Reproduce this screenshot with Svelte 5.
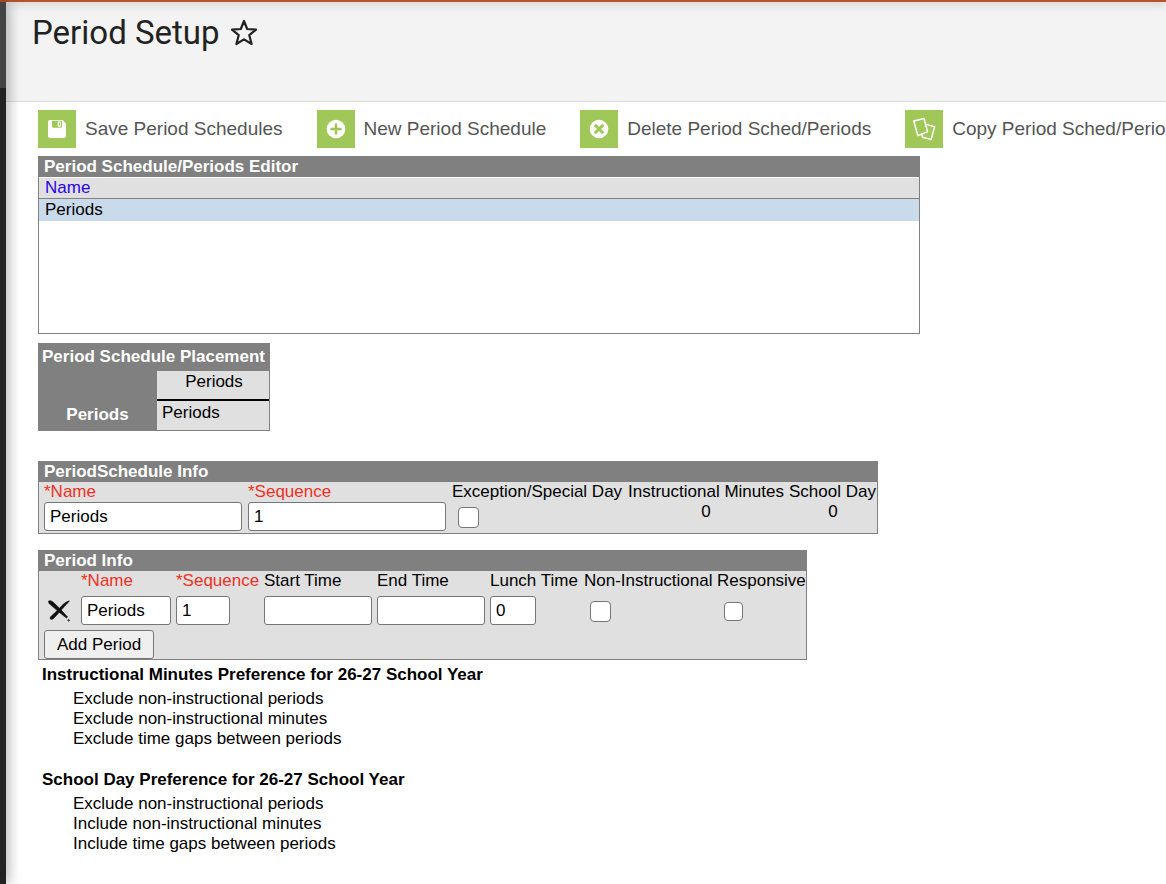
<script>
  const actions = [
    { label: 'Save Period Schedules', icon: 'save' },
    { label: 'New Period Schedule', icon: 'add' },
    { label: 'Delete Period Sched/Periods', icon: 'remove' },
    { label: 'Copy Period Sched/Periods', icon: 'copy' }
  ];

  const preferences = [
    {
      title: 'Instructional Minutes Preference for 26-27 School Year',
      rules: [
        'Exclude non-instructional periods',
        'Exclude non-instructional minutes',
        'Exclude time gaps between periods'
      ]
    },
    {
      title: 'School Day Preference for 26-27 School Year',
      rules: [
        'Exclude non-instructional periods',
        'Include non-instructional minutes',
        'Include time gaps between periods'
      ]
    }
  ];

  let scheduleName = $state('Periods');
  let scheduleSequence = $state('1');
  let exceptionDay = $state(false);
  let periods = $state([
    { name: 'Periods', sequence: '1', start: '', end: '', lunch: '0', nonInstructional: false, responsive: false }
  ]);

  function addPeriod() {
    periods.push({ name: '', sequence: String(periods.length + 1), start: '', end: '', lunch: '0', nonInstructional: false, responsive: false });
  }
</script>

<div class="shell">
  <div class="accent"></div>
  <div class="body">
    <aside class="rail"><div class="rail-top"></div></aside>
    <div class="page">
      <header class="page-head">
        <h1>Period Setup</h1>
        <button class="star" type="button" aria-label="Add to favorites">
          <svg width="28" height="28" viewBox="0 0 28 28" fill="none" stroke="#222" stroke-width="2.2" stroke-linejoin="round">
            <path d="M14 2 L17.2 10 L26 10.6 L19.3 16.2 L21.6 25 L14 20.4 L6.4 25 L8.7 16.2 L2 10.6 L10.8 10 Z" />
          </svg>
        </button>
      </header>

      <nav class="toolbar">
        {#each actions as action}
          <button class="action" type="button">
            <span class="tile">
              <svg width="38" height="38" viewBox="0 0 38 38" aria-hidden="true">
                {#if action.icon === 'save'}
                  <path fill="#fff" d="M12 10h12.5l3.5 3.5V26a2 2 0 0 1-2 2H12a2 2 0 0 1-2-2V12a2 2 0 0 1 2-2z" />
                  <path fill="#a0c858" d="M14 10.8h10v5.7a1.2 1.2 0 0 1-1.2 1.2h-7.6a1.2 1.2 0 0 1-1.2-1.2z" />
                  <rect fill="#fff" x="19.8" y="11.6" width="3.2" height="5.2" rx="0.8" />
                  <path fill="#a0c858" d="M21 12.6h1v3.2h-1z" />
                {:else if action.icon === 'add'}
                  <circle cx="19" cy="19" r="9.3" fill="#fff" />
                  <path stroke="#a0c858" stroke-width="2.6" d="M19 13.4v11.2M13.4 19h11.2" />
                {:else if action.icon === 'remove'}
                  <circle cx="19" cy="19" r="9.3" fill="#fff" />
                  <path stroke="#a0c858" stroke-width="3" d="M14.7 14.7l8.6 8.6M23.3 14.7l-8.6 8.6" />
                {:else}
                  <g fill="none" stroke="#fff" stroke-width="1.5" stroke-linejoin="round">
                    <path d="M8.8 11L19 8.4l3.6 13.4-9.8 3.8z" />
                    <path d="M21.4 14.4l8.2 2.3-3.4 12.7-8.6-2.2-.9-3.4" />
                  </g>
                {/if}
              </svg>
            </span>
            {action.label}
          </button>
        {/each}
      </nav>

      <main class="content">
        <section class="editor">
          <h2>Period Schedule/Periods Editor</h2>
          <table>
            <thead><tr><th><a href="#name">Name</a></th></tr></thead>
            <tbody><tr><td>Periods</td></tr></tbody>
          </table>
        </section>

        <table class="placement">
          <thead>
            <tr><th colspan="2" class="caption">Period Schedule Placement</th></tr>
            <tr><td class="corner"></td><th class="col">Periods</th></tr>
          </thead>
          <tbody><tr><th class="row">Periods</th><td>Periods</td></tr></tbody>
        </table>

        <section class="panel schedule">
          <h2>PeriodSchedule Info</h2>
          <table>
            <thead>
              <tr>
                <th class="w-name"><label class="required" for="schedule-name">*Name</label></th>
                <th class="w-seq"><label class="required" for="schedule-seq">*Sequence</label></th>
                <th class="w-exc"><label for="exception">Exception/Special Day</label></th>
                <th class="w-min">Instructional Minutes</th>
                <th>School Day</th>
              </tr>
            </thead>
            <tbody>
              <tr>
                <td><input class="wide" id="schedule-name" type="text" bind:value={scheduleName} /></td>
                <td><input class="wide" id="schedule-seq" type="text" bind:value={scheduleSequence} /></td>
                <td class="tick"><input id="exception" type="checkbox" bind:checked={exceptionDay} /></td>
                <td class="total minutes">0</td>
                <td class="total">0</td>
              </tr>
            </tbody>
          </table>
        </section>

        <section class="panel periods">
          <h2>Period Info</h2>
          <table>
            <thead>
              <tr>
                <th class="p-del"></th>
                <th class="p-name required">*Name</th>
                <th class="p-seq required">*Sequence</th>
                <th class="p-time">Start Time</th>
                <th class="p-time">End Time</th>
                <th class="p-lunch">Lunch Time</th>
                <th class="p-non">Non-Instructional</th>
                <th>Responsive</th>
              </tr>
            </thead>
            <tbody>
              {#each periods as period, i}
                <tr>
                  <td>
                    <button class="delete" type="button" aria-label="Delete period" onclick={() => periods.splice(i, 1)}>
                      <svg width="24" height="24" viewBox="0 0 24 24" fill="#111" stroke="#111" stroke-width="0.6">
                        <path d="M1.4 3.2C3 2.4 5 3 6.6 4.6L13 10.8 20.6 19 19.4 20 11.4 13.6 5 8 2 5.4Z" />
                        <path d="M22.4 2.8C21.6 4.6 18 7.4 14.4 12L7.8 19.2C6.4 21 4.6 22 3.4 21 2.4 20 4 18 6 16.6L12.4 10.4C15.4 7 18 3.8 22.4 2.8Z" />
                        <circle cx="21.6" cy="22.4" r="0.8" fill="#444" />
                      </svg>
                    </button>
                  </td>
                  <td><input class="f-name" type="text" aria-label="Name" bind:value={period.name} /></td>
                  <td><input class="f-seq" type="text" aria-label="Sequence" bind:value={period.sequence} /></td>
                  <td><input class="f-time" type="text" aria-label="Start Time" bind:value={period.start} /></td>
                  <td><input class="f-time" type="text" aria-label="End Time" bind:value={period.end} /></td>
                  <td><input class="f-lunch" type="text" aria-label="Lunch Time" bind:value={period.lunch} /></td>
                  <td class="tick"><input type="checkbox" aria-label="Non-Instructional" bind:checked={period.nonInstructional} /></td>
                  <td class="tick"><input class="small" type="checkbox" aria-label="Responsive" bind:checked={period.responsive} /></td>
                </tr>
              {/each}
            </tbody>
          </table>
          <button class="add" type="button" onclick={addPeriod}>Add Period</button>
        </section>

        {#each preferences as preference}
          <section class="preference">
            <h3>{preference.title}</h3>
            <ul>
              {#each preference.rules as rule}<li>{rule}</li>{/each}
            </ul>
          </section>
        {/each}
      </main>
    </div>
  </div>
</div>

<style>
  :global(body) {
    margin: 0;
    background: #fff;
  }
  .shell, .shell * { box-sizing: border-box; }
  .shell {
    display: flex;
    flex-direction: column;
    min-height: 100vh;
    overflow: hidden;
    color: #000;
    font: 17px/20px "Liberation Sans", Arial, sans-serif;
  }
  .accent {
    position: relative;
    z-index: 2;
    height: 2px;
    background: #b4532e;
    box-shadow: 0 0 10px rgba(0, 0, 0, 0.5);
  }
  .body { display: flex; flex: 1; }
  .rail {
    position: relative;
    z-index: 3;
    flex: none;
    width: 6px;
    background: #222;
    box-shadow: 0 0 14px rgba(0, 0, 0, 0.6);
  }
  .rail-top { height: 86px; background: #444; }
  .page { flex: 1; min-width: 0; }

  .page-head {
    display: flex;
    align-items: flex-start;
    gap: 10px;
    height: 100px;
    padding: 11px 26px;
    background: #f3f3f3;
    border-bottom: 1px solid #ddd;
  }
  h1, h2, h3, ul { margin: 0; padding: 0; }
  h1 {
    color: #222;
    font: 400 33px/40px Roboto, sans-serif;
  }
  button { font: inherit; color: inherit; cursor: pointer; }
  .star {
    display: flex;
    margin-top: 6px;
    padding: 0;
    border: 0;
    background: none;
  }

  .toolbar {
    display: flex;
    gap: 34px;
    padding: 8px 32px;
    overflow: hidden;
  }
  .action {
    display: flex;
    flex: none;
    align-items: center;
    gap: 9px;
    padding: 0;
    border: 0;
    background: none;
    color: #555;
    font-size: 19px;
    white-space: nowrap;
  }
  .tile { display: flex; background: #a0c858; }

  .content { padding: 0 32px; }
  table { border-collapse: separate; border-spacing: 0; }
  th { padding: 0; font-weight: 400; text-align: left; white-space: nowrap; }
  td { padding: 0; vertical-align: top; }
  h2 {
    height: 21px;
    padding: 0 5px;
    background: #808080;
    color: #fff;
    font-size: 17px;
    line-height: 22px;
  }

  .editor {
    width: 882px;
    max-width: 100%;
    min-height: 178px;
    border: 1px solid #808080;
    border-top: 0;
  }
  .editor table { width: 100%; }
  .editor th {
    height: 22px;
    padding: 0 6px;
    border-top: 1px solid #fff;
    border-bottom: 1px solid #808080;
    background: #e0e0e0;
  }
  .editor a { color: #2b00f0; text-decoration: none; }
  .editor td { height: 22px; padding: 1px 6px; background: #c9daea; }

  .placement {
    margin-top: 9px;
    border: solid #808080;
    border-width: 0 1px 1px 0;
    background: #808080;
  }
  .placement .caption {
    height: 28px;
    padding: 0 4px;
    color: #fff;
    font-weight: 700;
  }
  .placement .corner { width: 119px; }
  .placement .col {
    width: 112px;
    height: 30px;
    padding: 1px 0 0 2px;
    border-bottom: 2px solid #000;
    background: #e0e0e0;
    text-align: center;
    vertical-align: top;
  }
  .placement .row { padding-bottom: 2px; color: #fff; font-weight: 700; text-align: center; }
  .placement tbody td { height: 29px; padding: 2px 5px; background: #e0e0e0; }

  .panel {
    max-width: 100%;
    border: 1px solid #808080;
    border-top: 0;
    background: #e0e0e0;
  }
  .panel table { width: 100%; table-layout: fixed; }
  .panel th { height: 20px; }
  .required { color: #ee3124; }
  .schedule { width: 840px; margin-top: 30px; padding: 0 0 2px 5px; }
  .schedule h2, .periods h2 { margin: 0 0 0 -5px; }
  .w-name, .w-seq { width: 204px; }
  .w-exc { width: 176px; }
  .w-min { width: 161px; }
  .total { text-align: center; }
  .minutes { padding-right: 5px; }

  input[type='text'] {
    display: block;
    height: 29px;
    margin: 0;
    padding: 0 5px;
    border: 1px solid #767676;
    border-radius: 3px;
    background: #fff;
    color: #000;
    font: inherit;
  }
  input.wide { width: 198px; }
  input.f-name { width: 90px; }
  input.f-seq { width: 54px; }
  input.f-time { width: 108px; }
  input.f-lunch { width: 46px; }
  .tick { padding: 5px 6px 0; }
  input[type='checkbox'] {
    display: block;
    width: 21px;
    height: 21px;
    margin: 0;
    appearance: none;
    border: 1px solid #767676;
    border-radius: 4px;
    background: #fff;
  }
  input[type='checkbox']:checked { background: #2374e1; }
  input[type='checkbox'].small { width: 19px; height: 19px; margin: 1px; }

  .periods { width: 769px; margin-top: 16px; padding-left: 5px; }
  .periods thead th { height: 25px; vertical-align: top; }
  .p-del { width: 37px; }
  .p-name { width: 95px; }
  .p-seq { width: 88px; }
  .p-time { width: 113px; }
  .p-lunch { width: 94px; }
  .p-non { width: 133px; }
  .delete {
    display: flex;
    margin: 2px 3px;
    padding: 0;
    border: 0;
    background: none;
  }
  .add {
    display: block;
    height: 29px;
    margin-top: 5px;
    padding: 0 12px;
    border: 1px solid #767676;
    border-radius: 3px;
    background: #efefef;
  }

  .preference { padding: 5px 4px 16px; }
  h3 { margin-bottom: 4px; font-size: 17px; line-height: 20px; }
  ul { padding-left: 31px; list-style: none; }
</style>
